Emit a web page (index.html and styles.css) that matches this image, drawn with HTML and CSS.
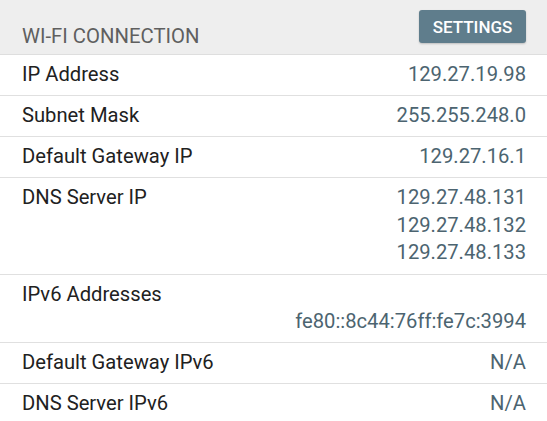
FILE: index.html
```html
<!DOCTYPE html>
<html>
<head>
<meta charset="utf-8">
<link rel="stylesheet" href="styles.css">
</head>
<body>
<div class="screen">
  <div class="header">
    <span class="title">WI-FI CONNECTION</span>
    <button class="btn">SETTINGS</button>
  </div>
  <div class="row">
    <span class="label">IP Address</span>
    <div class="values"><span>129.27.19.98</span></div>
  </div>
  <div class="row">
    <span class="label">Subnet Mask</span>
    <div class="values"><span>255.255.248.0</span></div>
  </div>
  <div class="row">
    <span class="label">Default Gateway IP</span>
    <div class="values"><span>129.27.16.1</span></div>
  </div>
  <div class="row">
    <span class="label">DNS Server IP</span>
    <div class="values multi"><span>129.27.48.131</span><span>129.27.48.132</span><span>129.27.48.133</span></div>
  </div>
  <div class="row stacked">
    <span class="label">IPv6 Addresses</span>
    <div class="values"><span>fe80::8c44:76ff:fe7c:3994</span></div>
  </div>
  <div class="row">
    <span class="label">Default Gateway IPv6</span>
    <div class="values"><span>N/A</span></div>
  </div>
  <div class="row">
    <span class="label">DNS Server IPv6</span>
    <div class="values"><span>N/A</span></div>
  </div>
</div>
</body>
</html>
```

FILE: styles.css
```css
html, body {
  margin: 0;
  padding: 0;
  background: #ffffff;
}
body {
  font-family: Roboto, "Noto Sans", sans-serif;
}
.screen {
  width: 547px;
  height: 421px;
  overflow: hidden;
}
.header {
  height: 54px;
  background: #eeeeee;
  border-bottom: 1px solid #dedede;
  display: flex;
  align-items: flex-start;
  justify-content: space-between;
  padding: 0 21px 0 22px;
  box-sizing: content-box;
}
.title {
  font-size: 20.3px;
  line-height: 24px;
  color: #5f5f5f;
  margin-top: 24px;
}
.btn {
  font-family: Roboto, sans-serif;
  font-size: 17px;
  font-weight: 500;
  color: #ffffff;
  background: #5f7d8c;
  border: none;
  border-radius: 3px;
  width: 107px;
  height: 33px;
  margin-top: 10px;
  padding: 0;
  box-shadow: 0 1px 2px rgba(0,0,0,0.2);
}
.row {
  display: flex;
  justify-content: space-between;
  padding: 6px 21px 7px 22px;
  border-bottom: 1px solid #e0e0e0;
  font-size: 20.2px;
  line-height: 27px;
}
.row.stacked {
  flex-direction: column;
  align-items: stretch;
}
.label {
  color: #212121;
}
.values {
  display: flex;
  flex-direction: column;
  align-items: flex-end;
  color: #4c6470;
}
.values.multi {
  line-height: 27.5px;
}
```
